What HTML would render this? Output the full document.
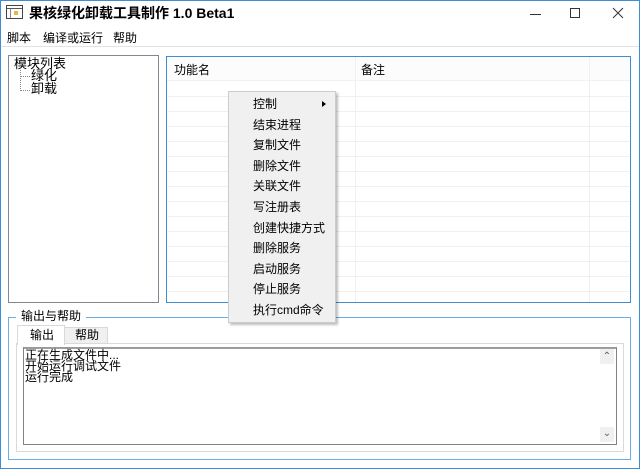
<!DOCTYPE html><html><head><style>
*{margin:0;padding:0;box-sizing:border-box}
body{width:640px;height:469px;background:#fff;font-family:"Liberation Sans","Noto Sans CJK SC",sans-serif;font-size:12px;color:#000;position:relative;overflow:hidden}
.a{position:absolute}
.win{left:0;top:0;width:640px;height:469px;border:1px solid #3c8fd6;background:#fff}
.t{white-space:nowrap;line-height:14px}
.row{left:1px;width:462px;height:1px;background:#f0f0f0}
.mi{left:24px;white-space:nowrap;line-height:14px}
</style></head><body>
<div class="a win"></div>
<div class="a" style="left:1px;top:46px;width:638px;height:1px;background:#e3e3e3"></div>
<div class="a" style="left:6px;top:5px;width:17px;height:14px;border:1px solid #444;background:#fff"></div>
<div class="a" style="left:7px;top:8px;width:15px;height:1px;background:#555"></div>
<div class="a" style="left:10px;top:9px;width:1px;height:9px;background:#888"></div>
<div class="a" style="left:14px;top:11px;width:4px;height:4px;background:#e6b84a"></div>
<div class="a t" style="left:29px;top:5px;font-size:14px;font-weight:bold;line-height:16px">果核绿化卸载工具制作 1.0 Beta1</div>
<div class="a" style="left:530px;top:14px;width:11px;height:1px;background:#333"></div>
<div class="a" style="left:570px;top:8px;width:10px;height:10px;border:1px solid #333"></div>
<svg class="a" style="left:612px;top:7px" width="12" height="12"><path d="M1 1L11 11M11 1L1 11" stroke="#333" stroke-width="1"/></svg>
<div class="a t" style="left:7px;top:31px">脚本</div>
<div class="a t" style="left:43px;top:31px">编译或运行</div>
<div class="a t" style="left:113px;top:31px">帮助</div>
<div class="a" style="left:8px;top:55px;width:151px;height:248px;border:1px solid #828790;background:#fff"></div>
<div class="a t" style="left:14px;top:57px;font-size:13px">模块列表</div>
<div class="a" style="left:20px;top:70px;width:1px;height:21px;border-left:1px dotted #888"></div>
<div class="a" style="left:21px;top:76px;width:9px;border-top:1px dotted #888"></div>
<div class="a" style="left:21px;top:90px;width:9px;border-top:1px dotted #888"></div>
<div class="a t" style="left:31px;top:69px;font-size:13px">绿化</div>
<div class="a t" style="left:31px;top:82px;font-size:13px">卸载</div>
<div class="a" style="left:166px;top:56px;width:465px;height:247px;border:1px solid #3c8fd6;background:#fff">
<div class="a" style="left:0;top:0;width:463px;height:24px;background:#fcfcfc;border-bottom:1px solid #eef3fa"></div>
<div class="a" style="left:188px;top:0;width:1px;height:245px;background:#f0f0f0"></div>
<div class="a" style="left:422px;top:0;width:1px;height:245px;background:#f0f0f0"></div>
<div class="a t" style="left:7px;top:6px">功能名</div>
<div class="a t" style="left:194px;top:6px">备注</div>
<div class="a row" style="top:39px"></div><div class="a row" style="top:54px"></div><div class="a row" style="top:69px"></div><div class="a row" style="top:84px"></div><div class="a row" style="top:99px"></div><div class="a row" style="top:114px"></div><div class="a row" style="top:129px"></div><div class="a row" style="top:144px"></div><div class="a row" style="top:159px"></div><div class="a row" style="top:174px"></div><div class="a row" style="top:189px"></div><div class="a row" style="top:204px"></div><div class="a row" style="top:219px"></div><div class="a row" style="top:234px"></div>
</div>
<div class="a" style="left:8px;top:317px;width:623px;height:143px;border:1px solid #6aaee4"></div>
<div class="a t" style="left:16px;top:309px;background:#fff;padding:0 5px">输出与帮助</div>
<div class="a" style="left:16px;top:343px;width:608px;height:109px;border:1px solid #d9d9d9;background:#fff"></div>
<div class="a" style="left:64px;top:327px;width:44px;height:17px;border:1px solid #d9d9d9;background:#f0f0f0"></div>
<div class="a t" style="left:75px;top:328px">帮助</div>
<div class="a" style="left:17px;top:325px;width:48px;height:20px;border:1px solid #d9d9d9;border-bottom:none;background:#fff"></div>
<div class="a t" style="left:30px;top:328px">输出</div>
<div class="a" style="left:23px;top:347px;width:594px;height:98px;border:1px solid #828282;border-top-color:#999;background:#fff"></div>
<div class="a" style="left:24px;top:348px;width:592px;height:1px;background:#a0a0a0"></div>
<div class="a" style="left:600px;top:349px;width:14px;height:15px;background:#f0f0f0;color:#606060;font-size:10px;text-align:center;line-height:15px">&#8963;</div>
<div class="a" style="left:600px;top:427px;width:14px;height:15px;background:#f0f0f0;color:#606060;font-size:10px;text-align:center;line-height:13px">&#8964;</div>
<div class="a" style="left:25px;top:350px;font-size:12px;line-height:11px;white-space:nowrap">正在生成文件中...<br>开始运行调试文件<br>运行完成</div>
<div class="a" style="left:230px;top:93px;width:108px;height:232px;background:rgba(0,0,0,.25);filter:blur(1px)"></div>
<div class="a" style="left:228px;top:91px;width:108px;height:232px;background:#f0f0f0;border:1px solid #ccc">
<div class="a mi" style="top:5px">控制</div>
<div class="a" style="left:93px;top:9px;width:0;height:0;border-left:4px solid #000;border-top:3.5px solid transparent;border-bottom:3.5px solid transparent"></div>
<div class="a mi" style="top:26px">结束进程</div>
<div class="a mi" style="top:46px">复制文件</div>
<div class="a mi" style="top:67px">删除文件</div>
<div class="a mi" style="top:87px">关联文件</div>
<div class="a mi" style="top:108px">写注册表</div>
<div class="a mi" style="top:129px">创建快捷方式</div>
<div class="a mi" style="top:149px">删除服务</div>
<div class="a mi" style="top:170px">启动服务</div>
<div class="a mi" style="top:190px">停止服务</div>
<div class="a mi" style="top:211px">执行cmd命令</div>
</div>
</body></html>
